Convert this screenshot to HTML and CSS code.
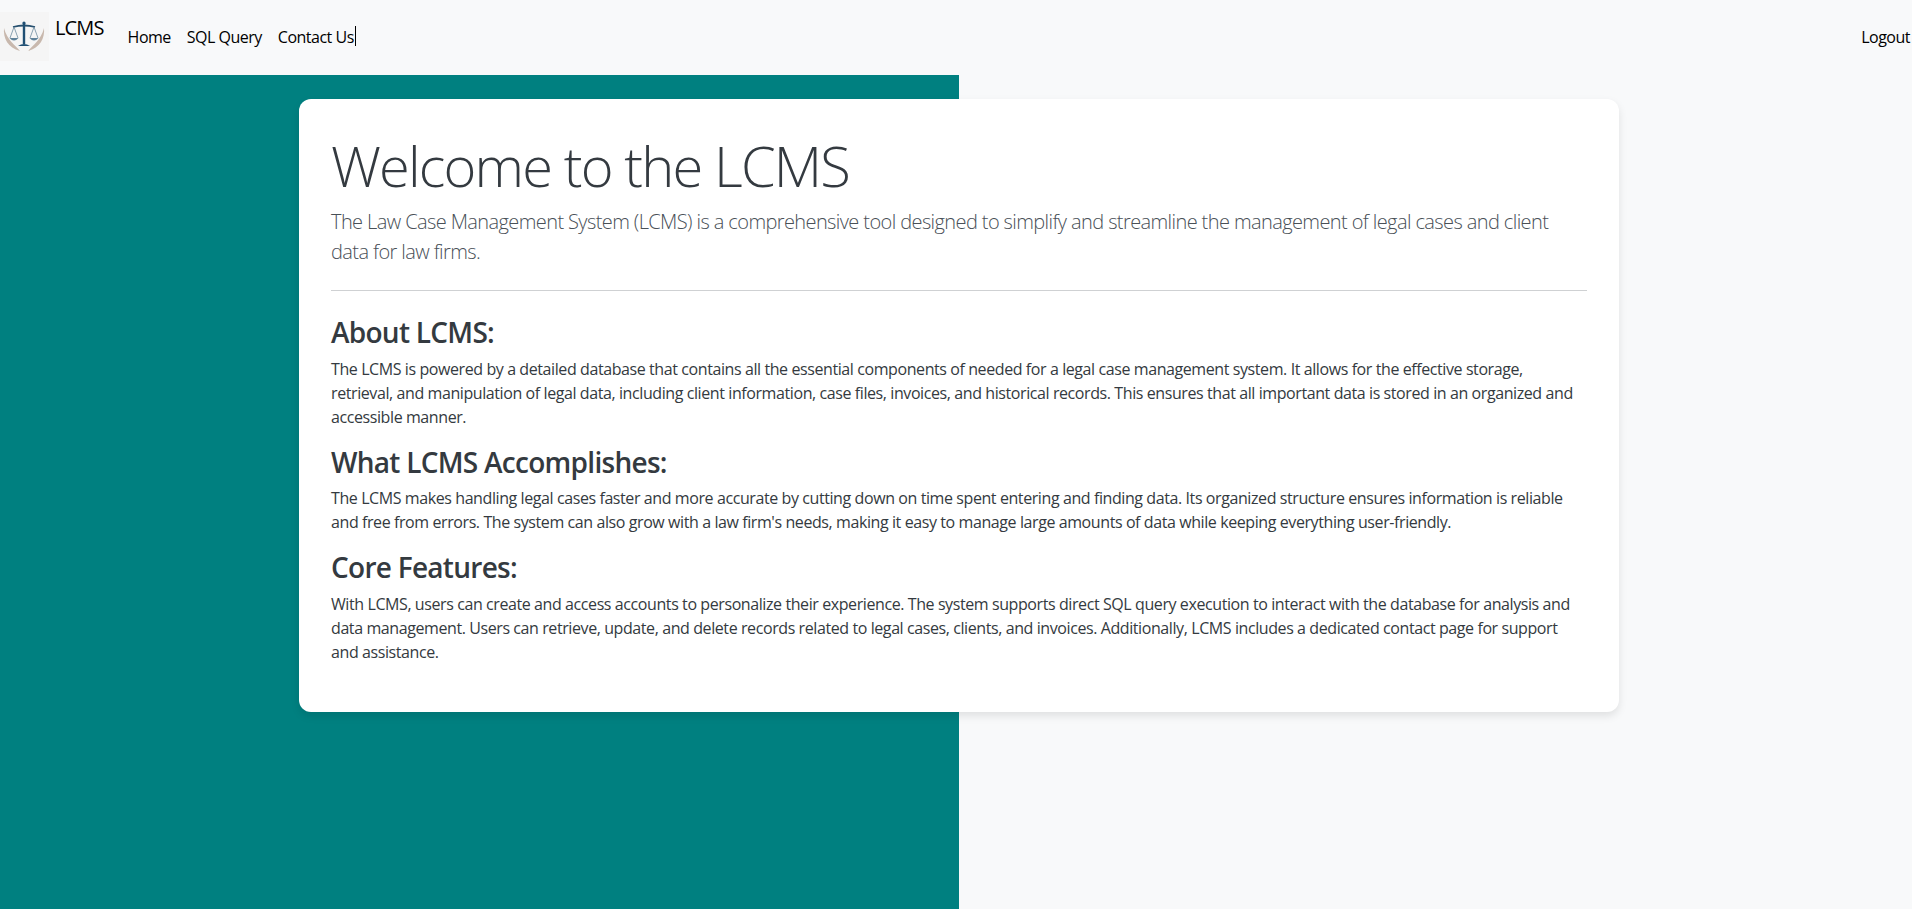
FILE: index.html
```html
<!DOCTYPE html>
<html lang="en">
<head>
<meta charset="utf-8">
<title>LCMS</title>
<link rel="stylesheet" href="styles.css">
</head>
<body>
<nav class="navbar">
  <a class="brand" href="#">
    <svg class="logo" viewBox="0 0 49 49" aria-hidden="true">
      <rect width="49" height="49" fill="#f5f5f5"/>
      <path d="M4 16C3 26 8 36 20 39C15 33 7 28 4 16Z" fill="#c8b8ad"/>
      <path d="M44 16C45 26 40 36 28 39C33 33 41 28 44 16Z" fill="#c8b8ad"/>
      <path d="M13 15Q24 12 35 15" stroke="#27506f" stroke-width="1.800" fill="none"/>
      <path d="M24 11V32" stroke="#1f4f73" stroke-width="2.400" fill="none"/>
      <path d="M18 34Q24 30 30 34Z" fill="#1f4f73"/>
      <circle cx="24" cy="11" r="1.600" fill="#1f4f73"/>
      <path d="M14 15L10 26M14 15L18 26M34 15L30 26M34 15L38 26" stroke="#6f8ba0" stroke-width=".8" fill="none"/>
      <path d="M9.500 26Q14 31 18.500 26ZM29.500 26Q34 31 38.500 26Z" fill="#5f8199"/>
    </svg>
    <span class="brand-name">LCMS</span>
  </a>
  <ul class="nav-list">
    <li><a class="nav-link" href="#">Home</a></li>
    <li><a class="nav-link" href="#">SQL Query</a></li>
    <li class="caret-host"><a class="nav-link" href="#">Contact Us</a><span class="caret"></span></li>
  </ul>
  <a class="nav-link logout" href="#">Logout</a>
</nav>
<main class="page">
  <section class="card">
    <h1 class="title">Welcome to the LCMS</h1>
    <p class="lead">The Law Case Management System (LCMS) is a comprehensive tool designed to simplify and streamline the management of legal cases and client data for law firms.</p>
    <hr class="rule">
    <h3 class="heading">About LCMS:</h3>
    <p class="copy">The LCMS is powered by a detailed database that contains all the essential components of needed for a legal case management system. It allows for the effective storage, retrieval, and manipulation of legal data, including client information, case files, invoices, and historical records. This ensures that all important data is stored in an organized and accessible manner.</p>
    <h3 class="heading">What LCMS Accomplishes:</h3>
    <p class="copy">The LCMS makes handling legal cases faster and more accurate by cutting down on time spent entering and finding data. Its organized structure ensures information is reliable and free from errors. The system can also grow with a law firm's needs, making it easy to manage large amounts of data while keeping everything user-friendly.</p>
    <h3 class="heading">Core Features:</h3>
    <p class="copy">With LCMS, users can create and access accounts to personalize their experience. The system supports direct SQL query execution to interact with the database for analysis and data management. Users can retrieve, update, and delete records related to legal cases, clients, and invoices. Additionally, LCMS includes a dedicated contact page for support and assistance.</p>
  </section>
</main>
</body>
</html>
```
FILE: styles.css
```css
* { box-sizing: border-box; }
html, body { margin: 0; height: 100%; overflow: hidden; }
body {
  font-family: "Open Sans", "Noto Sans", sans-serif;
  font-size: 16px;
  line-height: 24px;
  color: #212529;
  background: #f8f9fa;
}
.navbar {
  display: flex;
  align-items: flex-start;
  height: 75px;
  background: #f8f9fa;
  padding-top: 12px;
}
.brand {
  display: flex;
  align-items: flex-start;
  gap: 6px;
  margin-right: 16px;
  color: #000;
  text-decoration: none;
}
.logo { width: 49px; height: 49px; display: block; }
.brand-name { font-size: 20px; line-height: 30px; margin-top: 1px; letter-spacing: -.85px; }
.nav-list {
  display: flex;
  list-style: none;
  margin: 0;
  padding: 0;
}
.nav-link {
  display: block;
  padding: 13px 8px;
  color: #000;
  text-decoration: none;
  letter-spacing: -.5px;
}
.caret-host { position: relative; }
.caret {
  position: absolute;
  right: 6px;
  top: 14px;
  width: 1px;
  height: 20px;
  background: #000;
}
.logout { margin-left: auto; padding-right: 2px; }
.page {
  height: 834px;
  padding: 24px 0 0 299px;
  background: linear-gradient(to right, #008080 959px, #f8f9fa 959px);
}
.card {
  width: 1320px;
  padding: 32px;
  background: #fff;
  border-radius: 12px;
  box-shadow: 0 4px 8px rgba(0, 0, 0, .1);
}
.title {
  margin: 0 0 8px;
  padding-top: 2px;
  font-size: 56px;
  font-weight: 300;
  line-height: 65px;
  color: #343a40;
  letter-spacing: -1.85px;
}
.lead {
  margin: 0;
  padding-top: 1px;
  height: 60px;
  font-size: 20px;
  font-weight: 300;
  line-height: 30px;
  color: #495057;
  letter-spacing: -.6px;
}
.rule {
  margin: 24px 0;
  height: 1px;
  border: 0;
  background: #cfd1d3;
}
.heading {
  margin: 0 0 8px;
  padding-top: 1px;
  height: 33.6px;
  font-size: 28px;
  font-weight: 600;
  line-height: 33.6px;
  color: #343a40;
  letter-spacing: -.72px;
}
.copy {
  margin: 0 0 16px;
  color: #343a40;
  letter-spacing: -.41px;
}
```
